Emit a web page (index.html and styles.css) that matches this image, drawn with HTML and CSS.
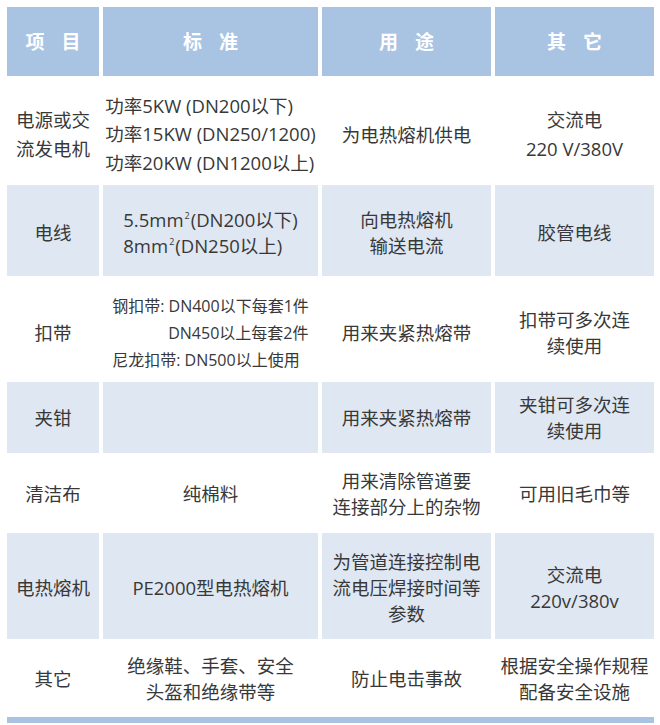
FILE: index.html
```html
<!DOCTYPE html>
<html lang="zh-CN">
<head>
<meta charset="utf-8">
<title>设备表</title>
<link rel="stylesheet" href="styles.css">
</head>
<body>
<div class="sheet">
  <div class="row head">
    <div class="cell">项目</div>
    <div class="cell">标准</div>
    <div class="cell">用途</div>
    <div class="cell">其它</div>
  </div>

  <div class="row r1 low">
    <div class="cell tall">电源或交<br>流发电机</div>
    <div class="cell"><div class="block tall">功率5KW (DN200以下)<br>功率15KW (DN250/1200)<br>功率20KW (DN1200以上)</div></div>
    <div class="cell">为电热熔机供电</div>
    <div class="cell tall">交流电<br>220 V/380V</div>
  </div>

  <div class="row r2 shade">
    <div class="cell">电线</div>
    <div class="cell"><div class="block">5.5mm<sup>2</sup>(DN200以下)<br>8mm<sup>2</sup>(DN250以上)</div></div>
    <div class="cell">向电热熔机<br>输送电流</div>
    <div class="cell">胶管电线</div>
  </div>

  <div class="row r3 low">
    <div class="cell">扣带</div>
    <div class="cell"><div class="block small">钢扣带: DN400以下每套1件<br><span class="indent">DN450以上每套2件</span><br>尼龙扣带: DN500以上使用</div></div>
    <div class="cell">用来夹紧热熔带</div>
    <div class="cell">扣带可多次连<br>续使用</div>
  </div>

  <div class="row r4 shade">
    <div class="cell">夹钳</div>
    <div class="cell"></div>
    <div class="cell">用来夹紧热熔带</div>
    <div class="cell">夹钳可多次连<br>续使用</div>
  </div>

  <div class="row r5">
    <div class="cell">清洁布</div>
    <div class="cell">纯棉料</div>
    <div class="cell">用来清除管道要<br>连接部分上的杂物</div>
    <div class="cell">可用旧毛巾等</div>
  </div>

  <div class="row r6 shade">
    <div class="cell">电热熔机</div>
    <div class="cell">PE2000型电热熔机</div>
    <div class="cell">为管道连接控制电<br>流电压焊接时间等<br>参数</div>
    <div class="cell">交流电<br>220v/380v</div>
  </div>

  <div class="row r7">
    <div class="cell">其它</div>
    <div class="cell">绝缘鞋、手套、安全<br>头盔和绝缘带等</div>
    <div class="cell">防止电击事故</div>
    <div class="cell">根据安全操作规程<br>配备安全设施</div>
  </div>

  <div class="bar"></div>
</div>
</body>
</html>
```

FILE: styles.css
```css
* {
  box-sizing: border-box;
}

html, body {
  margin: 0;
  padding: 0;
  background: #ffffff;
}

body {
  font-family: "Open Sans", "Noto Sans CJK SC", sans-serif;
  color: #383838;
  font-size: 18.5px;
}

.sheet {
  padding: 7px 0 0 7px;
  width: 660px;
}

.row {
  display: grid;
  grid-template-columns: 92px 215px 169px 159px;
  column-gap: 4px;
}

.cell {
  display: flex;
  align-items: center;
  justify-content: center;
  text-align: center;
  line-height: 26px;
  white-space: nowrap;
}

.tall {
  line-height: 28.5px;
}

.block {
  text-align: left;
}

.block.small {
  font-size: 16px;
  line-height: 27px;
}

.indent {
  padding-left: 56px;
}

sup {
  font-size: 9px;
  line-height: 0;
  vertical-align: 8px;
  margin: 0 1px 0 1px;
}

.head {
  height: 69px;
}

.head .cell {
  background: #a9c3e3;
  color: #ffffff;
  font-weight: bold;
  font-size: 19px;
  letter-spacing: 17px;
  text-indent: 17px;
}

.shade .cell {
  background: #dfe7f3;
}

.low .cell {
  padding-top: 8px;
}

.r1 { height: 109px; }
.r2 { height: 91px; padding-top: 0; }
.r2 .cell { padding-top: 4px; }
.r3 { height: 106px; }
.r4 { height: 71px; }
.r5 { height: 80px; }
.r5 .cell { padding-top: 2px; }
.r6 { height: 106px; }
.r6 .cell { padding-top: 3px; }
.r7 { height: 77px; }
.r7 .cell { padding-top: 2px; }

.bar {
  width: 647px;
  height: 6px;
  margin-top: 1px;
  background: #a9c3e3;
}
```
